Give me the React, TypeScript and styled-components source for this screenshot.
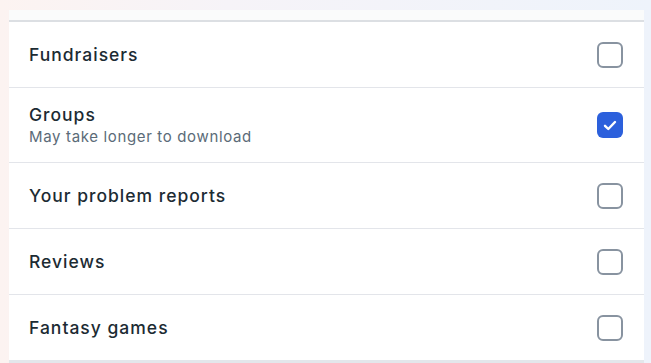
import React from "react";
import styled, { createGlobalStyle } from "styled-components";

const Global = createGlobalStyle`
  html, body { margin: 0; padding: 0; }
  body {
    width: 651px;
    height: 363px;
    overflow: hidden;
    background: linear-gradient(90deg, #fcf3f1 0%, #f6f3f8 35%, #eef3fb 100%);
    font-family: Inter, "Noto Sans", sans-serif;
  }
`;

const Page = styled.div`
  padding: 10px 7px 0 9px;
  height: 363px;
  box-sizing: border-box;
`;

const Panel = styled.div`
  background: #ffffff;
  display: flex;
  flex-direction: column;
`;

const TopStrip = styled.div`
  height: 10px;
  background: #fafbfb;
  border-bottom: 2px solid #dcdfe3;
`;

const Row = styled.label<{ $tall?: boolean }>`
  display: flex;
  align-items: center;
  justify-content: space-between;
  height: ${(p) => (p.$tall ? 74 : 65)}px;
  padding: 0 21px 0 20px;
  border-bottom: 1px solid #e3e5ea;
  box-sizing: content-box;
  &:last-child {
    border-bottom: 3px solid #e3e7eb;
  }
`;

const Texts = styled.div`
  display: flex;
  flex-direction: column;
  gap: 1px;
`;

const Title = styled.span`
  font-size: 17.5px;
  line-height: 22px;
  font-weight: 500;
  color: #1c2b33;
  letter-spacing: 1px;
`;

const Sub = styled.span`
  font-size: 15px;
  line-height: 20px;
  color: #5b6b78;
  letter-spacing: 0.65px;
`;

const Box = styled.span<{ $checked?: boolean }>`
  width: 26px;
  height: 26px;
  box-sizing: border-box;
  border-radius: 6px;
  border: ${(p) => (p.$checked ? "none" : "2.5px solid #8893a0")};
  background: ${(p) => (p.$checked ? "#2c60dc" : "#ffffff")};
  display: flex;
  align-items: center;
  justify-content: center;
`;

const items = [
  { title: "Fundraisers" },
  { title: "Groups", sub: "May take longer to download", checked: true },
  { title: "Your problem reports" },
  { title: "Reviews" },
  { title: "Fantasy games" },
];

export default function App() {
  return (
    <>
      <Global />
      <Page>
        <Panel>
          <TopStrip />
          {items.map((it) => (
            <Row key={it.title} $tall={!!it.sub}>
              <Texts>
                <Title>{it.title}</Title>
                {it.sub && <Sub>{it.sub}</Sub>}
              </Texts>
              <Box $checked={it.checked}>
                {it.checked && (
                  <svg width="14" height="11" viewBox="0 0 14 11">
                    <path d="M2 5.8 L5.3 9 L12 2" fill="none" stroke="#fff" strokeWidth="2.4" strokeLinecap="round" strokeLinejoin="round" />
                  </svg>
                )}
              </Box>
            </Row>
          ))}
        </Panel>
      </Page>
    </>
  );
}
